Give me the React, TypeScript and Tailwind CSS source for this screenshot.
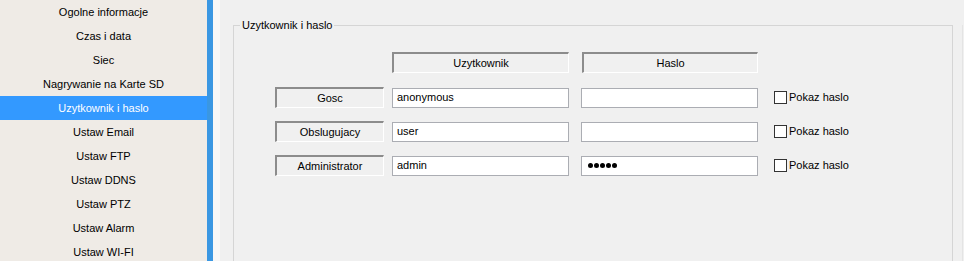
import React from "react";

const items = [
  "Ogolne informacje",
  "Czas i data",
  "Siec",
  "Nagrywanie na Karte SD",
  "Uzytkownik i haslo",
  "Ustaw Email",
  "Ustaw FTP",
  "Ustaw DDNS",
  "Ustaw PTZ",
  "Ustaw Alarm",
  "Ustaw WI-FI",
];

const rows = [
  { label: "Gosc", user: "anonymous", pass: 0 },
  { label: "Obslugujacy", user: "user", pass: 0 },
  { label: "Administrator", user: "admin", pass: 5 },
];

function Sunken({ children, w }: { children: React.ReactNode; w: string }) {
  return (
    <div
      className={`${w} h-[21px] flex items-center justify-center border-t-2 border-l-2 border-b border-r border-t-[#8c8c8c] border-l-[#8c8c8c] border-b-white border-r-white bg-[#f0f0f0] text-[11px] text-black`}
    >
      {children}
    </div>
  );
}

function Input({ value, dots }: { value?: string; dots?: number }) {
  return (
    <div className="w-[177px] h-[20px] bg-white border border-[#abadb3] flex items-center pl-[4px] text-[11px] text-black">
      {dots ? (
        <div className="flex gap-[1px] ml-[2px]">
          {Array.from({ length: dots }).map((_, i) => (
            <span key={i} className="w-[5px] h-[5px] rounded-full bg-black" />
          ))}
        </div>
      ) : (
        value
      )}
    </div>
  );
}

export default function App() {
  return (
    <div
      className="w-[964px] h-[261px] overflow-hidden flex bg-[#f0f0f0]"
      style={{ fontFamily: '"Liberation Sans", Arial, sans-serif' }}
    >
      <div className="w-[207px] shrink-0 bg-[#efebe6] flex flex-col">
        {items.map((it) => {
          const sel = it === "Uzytkownik i haslo";
          return (
            <div
              key={it}
              className={`h-[24px] shrink-0 flex items-center justify-center text-[11px] ${
                sel ? "bg-[#3399ff] text-white" : "text-black"
              }`}
            >
              {it}
            </div>
          );
        })}
      </div>
      <div className="w-[6px] shrink-0 bg-[#3a97e2]" />
      <div className="w-[7px] shrink-0 bg-[#f7f7f7]" />
      <div className="flex-1 relative">
        <div className="ml-[13px] mt-[25px] w-[720px] h-[260px] border border-[#d5d5d5] relative">
          <div className="absolute -top-[9px] left-[6px] bg-[#f0f0f0] px-[2px] text-[11px] text-black leading-[16px]">
            Uzytkownik i haslo
          </div>
          <div className="pt-[26px] pl-[41px] flex flex-col">
            <div className="flex ml-[117px] gap-[13px]">
              <Sunken w="w-[177px]">Uzytkownik</Sunken>
              <Sunken w="w-[176px]">Haslo</Sunken>
            </div>
            <div className="mt-[14px] flex flex-col gap-[13px]">
              {rows.map((r) => (
                <div key={r.label} className="flex items-center">
                  <Sunken w="w-[109px]">{r.label}</Sunken>
                  <div className="ml-[8px]">
                    <Input value={r.user} />
                  </div>
                  <div className="ml-[12px]">
                    <Input dots={r.pass} />
                  </div>
                  <div className="ml-[16px] flex items-center">
                    <div className="w-[13px] h-[13px] bg-white border border-[#333]" />
                    <span className="ml-[2px] text-[11px] text-black">Pokaz haslo</span>
                  </div>
                </div>
              ))}
            </div>
          </div>
        </div>
        <div className="absolute left-[742px] top-[25px] w-[1px] h-[240px] bg-[#e4e4e4]" />
      </div>
    </div>
  );
}
